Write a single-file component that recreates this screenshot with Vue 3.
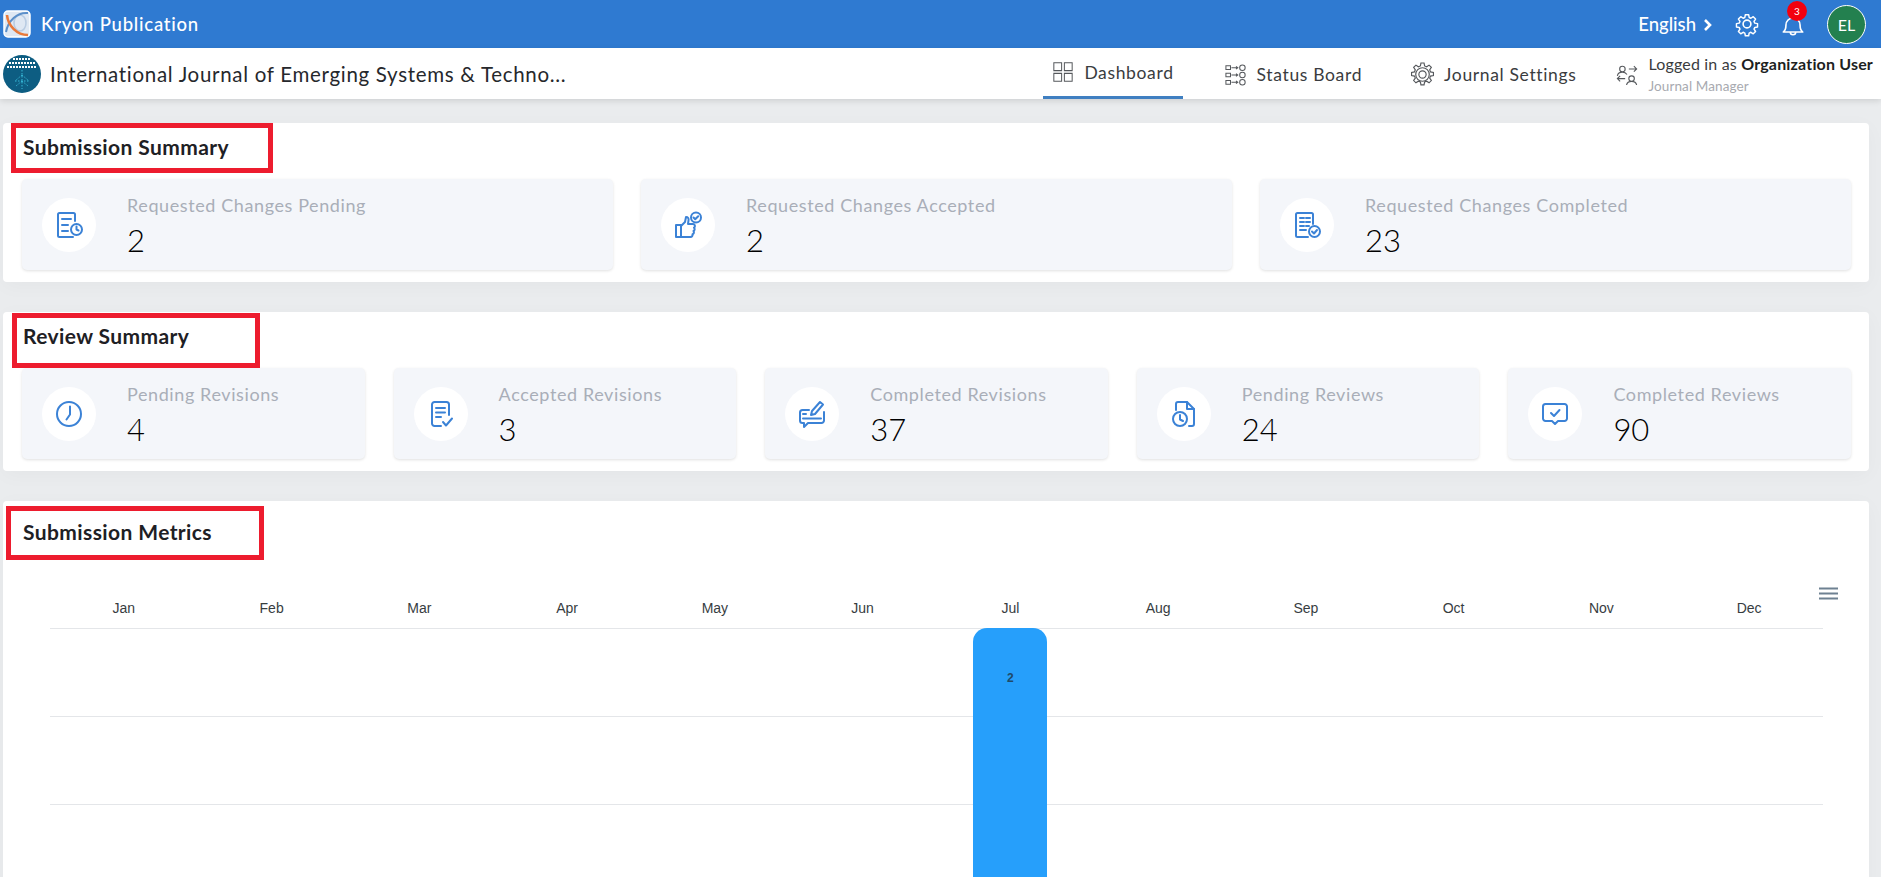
<template>
  <div class="page">
    <header class="topbar">
      <svg class="brand-logo" viewBox="0 0 28 28">
        <rect x="1" y="1" width="26" height="26" rx="4" fill="#dfe8f3" stroke="#fff" stroke-width="1.5" />
        <ellipse cx="17" cy="13" rx="6" ry="8" fill="none" stroke="#b9cce2" stroke-width="1.6" />
        <path d="M25 3C14 2 5 11 3 22" fill="none" stroke="#5b8fc9" stroke-width="2" />
        <path d="M4 5c1 11 10 20 21 20" fill="none" stroke="#e8793a" stroke-width="2.6" />
      </svg>
      <span class="brand-name">Kryon Publication</span>
      <div class="top-actions">
        <span class="lang">English</span>
        <svg class="chevron" viewBox="0 0 10 14"><path d="M2 2l5 5-5 5" /></svg>
        <svg class="top-icon gear" viewBox="0 0 24 24">
          <path d="M10.300 2.500h3.400l.5 2.800 1.800.8 2.400-1.600 2.400 2.400-1.600 2.400.8 1.800 2.800.5v3.400l-2.800.5-.8 1.800 1.600 2.400-2.400 2.400-2.400-1.600-1.800.8-.5 2.800h-3.400l-.5-2.800-1.800-.8-2.400 1.600-2.400-2.400 1.600-2.400-.8-1.800-2.800-.5v-3.400l2.800-.5.8-1.800-1.600-2.400 2.400-2.400 2.400 1.600 1.800-.8z" transform="translate(1.200 1.200) scale(.9)" />
          <circle cx="12" cy="12" r="3.600" />
        </svg>
        <div class="bell">
          <svg class="top-icon" viewBox="0 0 24 24">
            <path d="M3 18.500c2-1.500 2.500-3 2.500-6.500a6.500 6.500 0 0 1 13 0c0 3.500.5 5 2.500 6.500z" />
            <path d="M9.500 18.500a2.500 2.500 0 0 0 5 0" />
          </svg>
          <span class="badge">3</span>
        </div>
        <div class="avatar">EL</div>
      </div>
    </header>

    <nav class="subbar">
      <svg class="journal-logo" viewBox="0 0 38 38">
        <circle cx="19" cy="19" r="19" fill="#0d5d82" />
        <path d="M10 4h18M6 8h26M4 12h30" stroke="#fff" stroke-width="2" stroke-dasharray="2 1" />
        <path d="M19 15v19M19 20l-7 6M19 20l7 6M19 26l-6 5M19 26l6 5M12 26h14" stroke="#37b7d6" stroke-width="1" stroke-dasharray="1.500 1.500" fill="none" />
      </svg>
      <span class="journal-name">International Journal of Emerging Systems &amp; Techno...</span>
      <div class="tabs">
        <a v-for="tab in tabs" :key="tab.label" class="tab" :class="{ active: tab.active }">
          <svg class="tab-icon" :class="tab.iconClass" viewBox="0 0 24 24">
            <path v-for="d in tab.icon" :key="d" :d="d" />
          </svg>
          {{ tab.label }}
        </a>
      </div>
      <div class="user">
        <svg class="user-icon" viewBox="0 0 24 24">
          <path d="M4 6.500a3 3 0 1 0 6 0a3 3 0 1 0-6 0M1.500 14c.5-2.500 2.500-4 5.500-4s4 1 5 2.500M14 6.500h8.500M19.500 3.500l3 3-3 3" />
          <path d="M14 17a3 3 0 1 0 6 0a3 3 0 1 0-6 0M11.500 24c.5-2.500 2.500-4 5.500-4s5 1.500 5.500 4M10 17H1.500M4.500 14l-3 3 3 3" />
        </svg>
        <div>
          <div class="user-line">Logged in as <b>Organization User</b></div>
          <div class="user-role">Journal Manager</div>
        </div>
      </div>
    </nav>

    <main class="content">
      <section class="panel">
        <h2 class="panel-title">Submission Summary</h2>
        <div class="stats three">
          <div v-for="s in submissionStats" :key="s.label" class="stat">
            <div class="stat-icon">
              <svg viewBox="0 0 28 28"><path v-for="d in s.icon" :key="d" :d="d" /></svg>
            </div>
            <div class="stat-text">
              <div class="stat-label">{{ s.label }}</div>
              <div class="stat-value">{{ s.value }}</div>
            </div>
          </div>
        </div>
        <i class="callout callout-a"></i>
      </section>

      <section class="panel">
        <h2 class="panel-title">Review Summary</h2>
        <div class="stats five">
          <div v-for="s in reviewStats" :key="s.label" class="stat">
            <div class="stat-icon">
              <svg viewBox="0 0 28 28"><path v-for="d in s.icon" :key="d" :d="d" /></svg>
            </div>
            <div class="stat-text">
              <div class="stat-label">{{ s.label }}</div>
              <div class="stat-value">{{ s.value }}</div>
            </div>
          </div>
        </div>
        <i class="callout callout-b"></i>
      </section>

      <section class="panel metrics">
        <h2 class="panel-title">Submission Metrics</h2>
        <i class="callout callout-c"></i>
        <div class="chart">
          <svg class="chart-menu" viewBox="0 0 19 13">
            <path d="M0 1.500h19M0 6.500h19M0 11.500h19" />
          </svg>
          <div class="months">
            <span v-for="m in months" :key="m">{{ m }}</span>
          </div>
          <div class="plot">
            <div v-for="n in 4" :key="n" class="grid-row"></div>
            <div class="bar"><span>2</span></div>
          </div>
        </div>
      </section>
    </main>
  </div>
</template>

<script setup>
const months = ['Jan', 'Feb', 'Mar', 'Apr', 'May', 'Jun', 'Jul', 'Aug', 'Sep', 'Oct', 'Nov', 'Dec']

const tabs = [
  {
    label: 'Dashboard',
    active: true,
    icon: ['M2 2h8.500v8.500H2z', 'M13.500 2H22v8.500h-8.500z', 'M2 13.500h8.500V22H2z', 'M13.500 13.500H22V22h-8.500z'],
  },
  {
    label: 'Status Board',
    icon: [
      'M1 2h5v4H1zM1 10h5v4H1zM1 18h5v4H1z',
      'M7 4h7M7 12h7M7 20h7M12 2.500l2 1.500-2 1.500M12 10.500l2 1.500-2 1.500M12 18.500l2 1.500-2 1.500',
      'M16 4a3 3 0 1 0 6 0a3 3 0 1 0-6 0M16 12a3 3 0 1 0 6 0a3 3 0 1 0-6 0M16 20a3 3 0 1 0 6 0a3 3 0 1 0-6 0',
    ],
  },
  {
    label: 'Journal Settings',
    iconClass: 'tab-icon-big',
    icon: [
      'M10.500 1h3l.5 2.800 2 .8 2.300-1.600 2.200 2.200-1.600 2.300.8 2 2.800.5v3l-2.800.5-.8 2 1.600 2.300-2.200 2.200-2.300-1.600-2 .8-.5 2.800h-3l-.5-2.800-2-.8-2.300 1.600-2.200-2.200 1.600-2.300-.8-2-2.800-.5v-3l2.800-.5.8-2-1.600-2.300 2.200-2.200 2.300 1.600 2-.8z',
      'M5.500 12a6.500 6.500 0 1 0 13 0a6.500 6.500 0 1 0-13 0',
      'M8.500 12a3.500 3.500 0 1 0 7 0a3.500 3.500 0 1 0-7 0',
    ],
  },
]

const submissionStats = [
  {
    label: 'Requested Changes Pending',
    value: 2,
    icon: [
      'M20 10V3.500A1.500 1.500 0 0 0 18.500 2h-14A1.500 1.500 0 0 0 3 3.500v21A1.500 1.500 0 0 0 4.500 26H18',
      'M7 8h9M7 14h6M7 20h6',
      'M27 18.500a5.500 5.500 0 1 1-11 0a5.500 5.500 0 0 1 11 0z',
      'M21.500 15.500v3l2 1',
    ],
  },
  {
    label: 'Requested Changes Accepted',
    value: 2,
    icon: [
      'M2 14h5v12H2z',
      'M7 15l4-4 1-5c2 0 3 1.500 2.500 3.500L14 13h5a2 2 0 0 1 1 3.700 2 2 0 0 1-.5 3.300 2 2 0 0 1-1 3.200c.3 1.500-.5 2.800-2 2.800H7',
      'M27 6.500a5 5 0 1 1-10 0a5 5 0 0 1 10 0z',
      'M19.500 6.500l1.700 1.700 3-3',
    ],
  },
  {
    label: 'Requested Changes Completed',
    value: 23,
    icon: [
      'M20 13V3.500A1.500 1.500 0 0 0 18.500 2h-14A1.500 1.500 0 0 0 3 3.500v21A1.500 1.500 0 0 0 4.500 26H15',
      'M7 7h4M13 7h4M7 11h4M13 11h4M7 15h4M13 15h3M7 19h6',
      'M27 20.500a5.500 5.500 0 1 1-11 0a5.500 5.500 0 0 1 11 0z',
      'M19 20.500l2 2 3-3.500',
    ],
  },
]

const reviewStats = [
  {
    label: 'Pending Revisions',
    value: 4,
    icon: ['M26 14a12 12 0 1 1-24 0a12 12 0 0 1 24 0z', 'M15 6.500v8l-3.500 5'],
  },
  {
    label: 'Accepted Revisions',
    value: 3,
    icon: [
      'M22 15V4.500A2.500 2.500 0 0 0 19.500 2h-12A2.500 2.500 0 0 0 5 4.500v19A2.500 2.500 0 0 0 7.500 26H14',
      'M9 8h9M9 12.500h9M9 17h5',
      'M16 22l3 3.500 6-7',
    ],
  },
  {
    label: 'Completed Revisions',
    value: 37,
    icon: [
      'M11 10H4.500A2.500 2.500 0 0 0 2 12.500v8A2.500 2.500 0 0 0 4.500 23H6v4l4-4h13.500a2.500 2.500 0 0 0 2.500-2.500V12',
      'M13 15l1-4 8-9 3 2.500-8 9.500z',
      'M5 14h3M5 18.500h18',
    ],
  },
  {
    label: 'Pending Reviews',
    value: 24,
    icon: [
      'M6 10V4a2 2 0 0 1 2-2h9l7 7v15a2 2 0 0 1-2 2h-3',
      'M17 2v7h7',
      'M17 19a7 7 0 1 1-14 0a7 7 0 0 1 14 0z',
      'M10 15v4.500l3 1.500',
    ],
  },
  {
    label: 'Completed Reviews',
    value: 90,
    icon: [
      'M4.500 4h19A2.500 2.500 0 0 1 26 6.500v12a2.500 2.500 0 0 1-2.500 2.500H17l-3 3-3-3H4.500A2.500 2.500 0 0 1 2 18.500v-12A2.500 2.500 0 0 1 4.500 4z',
      'M10 13l3 3 5.500-6',
    ],
  },
]
</script>

<style>
html,
body {
  margin: 0;
  background: #eaecee;
}
</style>

<style scoped>
.page {
  height: 877px;
  overflow: hidden;
  font-family: Lato, 'Noto Sans', sans-serif;
  color: #26282c;
}

.topbar {
  height: 48px;
  background: #2f7ad1;
  color: #fff;
  display: flex;
  align-items: center;
  padding: 0 15px 0 3px;
}
.brand-logo {
  width: 28px;
  height: 28px;
  margin-right: 10px;
}
.brand-name {
  font-size: 18.500px;
  font-weight: 500;
  letter-spacing: 0.77px;
}
.top-actions {
  margin-left: auto;
  display: flex;
  align-items: center;
}
.lang {
  font-size: 18.500px;
  font-weight: 500;
}
.chevron {
  width: 10px;
  height: 14px;
  margin: 2px 21px 0 7px;
  fill: none;
  stroke: #fff;
  stroke-width: 2.600;
}
.top-icon {
  display: block;
  width: 26px;
  height: 26px;
  fill: none;
  stroke: #fff;
  stroke-width: 1.500;
  stroke-linejoin: round;
}
.bell {
  position: relative;
  margin: 2px 21px 0 20px;
}
.badge {
  position: absolute;
  top: -11px;
  left: 7px;
  width: 20px;
  height: 20px;
  border-radius: 50%;
  background: #f3000f;
  font-size: 10px;
  line-height: 20px;
  text-align: center;
}
.avatar {
  width: 37px;
  height: 37px;
  border: 1px solid #fff;
  border-radius: 50%;
  background: #23804f;
  font-size: 16px;
  line-height: 37px;
  text-align: center;
}

.subbar {
  height: 51px;
  background: #fff;
  display: flex;
  align-items: center;
  padding: 0 8px 0 3px;
  box-shadow: 0 2px 6px rgba(0, 0, 0, 0.12);
  position: relative;
}
.journal-logo {
  width: 38px;
  height: 38px;
  margin-right: 9px;
}
.journal-name {
  font-size: 20.500px;
  letter-spacing: 0.69px;
}
.tabs {
  margin-left: auto;
  align-self: stretch;
  display: flex;
  gap: 32px;
}
.tab {
  display: flex;
  align-items: center;
  gap: 10px;
  padding: 5px 9px 0;
  font-size: 17.500px;
  letter-spacing: 0.65px;
  color: #3a3c40;
  border-bottom: 3px solid transparent;
}
.tab.active {
  border-bottom-color: #3f7fc1;
  padding-top: 0;
  margin-right: 1px;
}
.tab-icon {
  width: 22px;
  height: 22px;
  fill: none;
  stroke: #55585c;
  stroke-width: 1.100;
}
.tab-icon-big {
  width: 25px;
  height: 25px;
  margin: 0 -1px 0 -2px;
}
.user {
  display: flex;
  align-items: center;
  gap: 11px;
  margin-left: 30px;
}
.user-icon {
  width: 22px;
  height: 22px;
  fill: none;
  stroke: #55585c;
  stroke-width: 1.200;
}
.user-line {
  font-size: 16px;
  letter-spacing: 0.17px;
  color: #3a3c40;
  white-space: nowrap;
}
.user-line b {
  color: #1d1f22;
}
.user-role {
  margin-top: 5px;
  font-size: 13.500px;
  letter-spacing: 0.1px;
  color: #a8aab0;
}

.content {
  padding: 24px 12px 0 3px;
}
.panel {
  position: relative;
  background: #fff;
  border-radius: 4px;
  margin-bottom: 30px;
  padding: 0 18px 12px 19px;
  box-shadow: 0 4px 20px rgba(0, 0, 0, 0.03);
}
.panel-title {
  margin: 0;
  height: 56px;
  padding: 12px 0 0 1px;
  box-sizing: border-box;
  font-size: 21px;
  line-height: 24px;
  font-weight: 700;
  letter-spacing: 0.4px;
  color: #1e2024;
}
.stats {
  display: grid;
  gap: 28px;
}
.three {
  grid-template-columns: repeat(3, 1fr);
}
.five {
  grid-template-columns: repeat(5, 1fr);
  gap: 29px;
}
.stat {
  height: 91px;
  background: #f4f6fa;
  border-radius: 5px;
  box-shadow: 0 1px 3px rgba(0, 0, 0, 0.12);
  display: flex;
  align-items: center;
  padding: 0 20px;
  gap: 31px;
}
.stat-icon {
  width: 54px;
  height: 54px;
  flex: none;
  border-radius: 50%;
  background: #fff;
  display: flex;
  align-items: center;
  justify-content: center;
}
.stat-icon svg {
  width: 28px;
  height: 28px;
  fill: none;
  stroke: #3b82d6;
  stroke-width: 2;
  stroke-linejoin: round;
  stroke-linecap: round;
}
.stat-text {
  margin-top: 2px;
}
.stat-label {
  font-size: 18px;
  line-height: 22px;
  color: #a9aeb8;
  letter-spacing: 0.6px;
}
.stat-value {
  margin-top: 6px;
  font-size: 31px;
  font-weight: 300;
  line-height: 36px;
  color: #000;
}

.callout {
  position: absolute;
  border: 5px solid #ed1c2e;
  box-sizing: border-box;
}
.callout-a {
  left: 8px;
  top: 0;
  width: 262px;
  height: 50px;
}
.callout-b {
  left: 9px;
  top: 1px;
  width: 248px;
  height: 55px;
}
.callout-c {
  left: 3px;
  top: 5px;
  width: 258px;
  height: 54px;
}

.metrics {
  height: 420px;
  padding-top: 7px;
}
.chart {
  position: relative;
  padding: 0 28px;
  margin-top: 35px;
}
.chart-menu {
  position: absolute;
  top: -12px;
  right: 13px;
  width: 19px;
  height: 13px;
  fill: none;
  stroke: #6e8192;
  stroke-width: 2;
}
.months {
  display: grid;
  grid-template-columns: repeat(12, 1fr);
  height: 29px;
  font-family: 'Liberation Sans', Arial, sans-serif;
  font-size: 14px;
  line-height: 18px;
  text-align: center;
  color: #373d3f;
}
.plot {
  position: relative;
}
.grid-row {
  height: 88px;
  border-top: 1px solid #e4e6e9;
  box-sizing: border-box;
}
.bar {
  position: absolute;
  top: 0;
  bottom: -40px;
  left: calc(100% * 6.5 / 12 - 37px);
  width: 74px;
  border-radius: 14px 14px 0 0;
  background: #269ffb;
  text-align: center;
  font-family: 'Liberation Sans', Arial, sans-serif;
  font-size: 12px;
  font-weight: 700;
  color: #204a68;
  padding-top: 43px;
  box-sizing: border-box;
}
</style>
